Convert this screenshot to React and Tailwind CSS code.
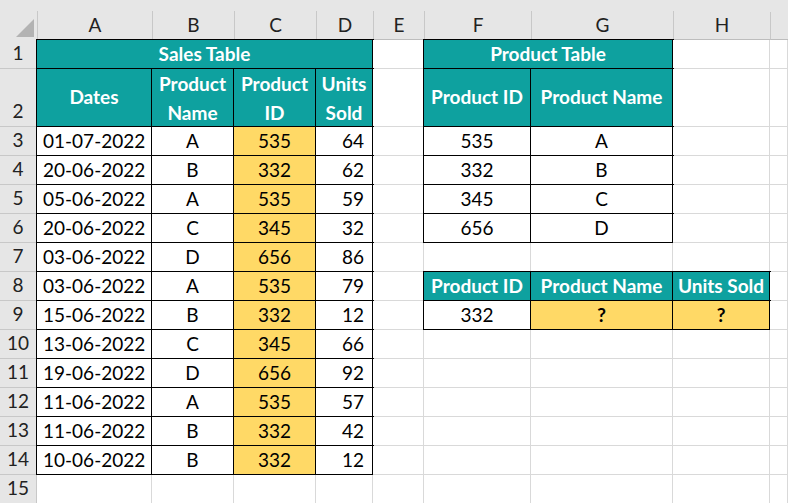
import React from "react";

const cols = ["A","B","C","D","E","F","G","H",""];
const sales = [
  ["01-07-2022","A","535","64"],["20-06-2022","B","332","62"],["05-06-2022","A","535","59"],
  ["20-06-2022","C","345","32"],["03-06-2022","D","656","86"],["03-06-2022","A","535","79"],
  ["15-06-2022","B","332","12"],["13-06-2022","C","345","66"],["19-06-2022","D","656","92"],
  ["11-06-2022","A","535","57"],["11-06-2022","B","332","42"],["10-06-2022","B","332","12"],
];
const prod = [["535","A"],["332","B"],["345","C"],["656","D"]];

const G = "border-r border-b border-[#d9d9d9]";
const T = "border-r border-b border-black shadow-[0_0_0_1px_#000]";
const TEAL = "bg-[#0ea19f] text-white font-bold";
const YEL = "bg-[#ffd966]";

function C({ cls = "", children, span }) {
  return <div className={`flex items-center overflow-hidden whitespace-nowrap ${span || ""} ${cls}`}>{children}</div>;
}

export default function App() {
  const cells = [];
  let k = 0;
  const add = (cls, children, span) => cells.push(<C key={k++} cls={cls} span={span}>{children}</C>);
  // header row
  cells.push(
    <div key={k++} className="bg-[#e6e6e6] flex items-end justify-end">
      <div className="w-0 h-0 border-l-[18px] border-l-transparent border-b-[18px] border-b-[#b3b3b3] mr-[3px] mb-[3px]" />
    </div>
  );
  cols.forEach((c) =>
    cells.push(
      <div key={k++} className="bg-[#e6e6e6] flex flex-col">
        <div className="h-[12px]" />
        <div className="flex-1 flex items-center justify-center border-l border-[#c8c8c8] border-b border-b-[#bdbdbd] text-[19px] text-[#222]">{c}</div>
      </div>
    )
  );
  const rh = (n) => add("bg-[#e6e6e6] justify-center border-b border-r border-[#c8c8c8] text-[19px] text-[#222] items-end pb-[1px]", n);
  const blank = (n = 1) => { for (let i = 0; i < n; i++) add(`${G} bg-white`, null); };
  // row1
  rh(1);
  add(`${T} ${TEAL} justify-center`, "Sales Table", "col-span-4");
  blank();
  add(`${T} ${TEAL} justify-center`, "Product Table", "col-span-2");
  blank(2);
  // row2
  rh(2);
  add(`${T} ${TEAL} justify-center`, "Dates");
  ["Product|Name","Product|ID","Units|Sold"].forEach((s) =>
    add(`${T} ${TEAL} flex-col justify-center items-center leading-[29px]`, s.split("|").map((x) => <div key={x}>{x}</div>))
  );
  blank();
  add(`${T} ${TEAL} justify-center`, "Product ID");
  add(`${T} ${TEAL} justify-center`, "Product Name");
  blank(2);
  sales.forEach((r, i) => {
    const n = i + 3;
    rh(n);
    add(`${T} bg-white pl-[6px]`, r[0]);
    add(`${T} bg-white justify-center`, r[1]);
    add(`${T} ${YEL} justify-center`, r[2]);
    add(`${T} bg-white justify-end pr-[8px]`, r[3]);
    blank();
    if (i < 4) {
      add(`${T} bg-white justify-center`, prod[i][0]);
      add(`${T} bg-white justify-center`, prod[i][1]);
      blank(2);
    } else if (n === 8) {
      add(`${T} ${TEAL} justify-center`, "Product ID");
      add(`${T} ${TEAL} justify-center`, "Product Name");
      add(`${T} ${TEAL} justify-center`, "Units Sold");
      blank();
    } else if (n === 9) {
      add(`${T} bg-white justify-center`, "332");
      add(`${T} ${YEL} justify-center font-bold`, "?");
      add(`${T} ${YEL} justify-center font-bold`, "?");
      blank();
    } else blank(4);
  });
  rh(15);
  blank(9);

  return (
    <div className="w-[788px] h-[503px] overflow-hidden bg-white text-black text-[19px]" style={{ fontFamily: "Lato, 'Open Sans', sans-serif" }}>
      <div className="grid grid-cols-[37px_115px_82px_82px_57px_51px_107px_142px_97px_18px] grid-rows-[40px_29px_58px_repeat(13,29px)]">
        {cells}
      </div>
    </div>
  );
}
